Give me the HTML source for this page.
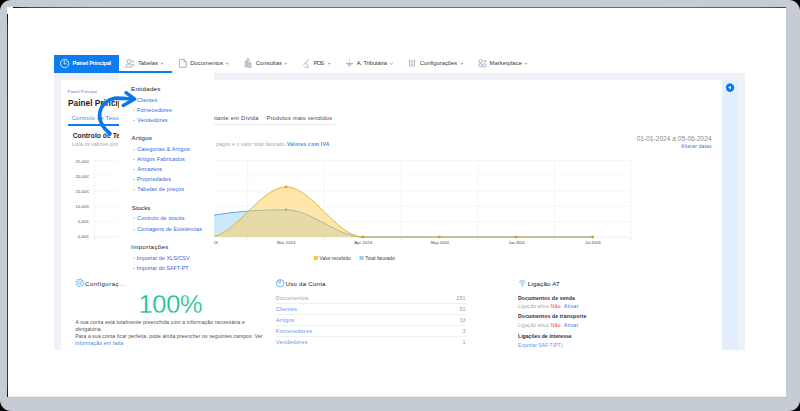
<!DOCTYPE html>
<html><head><meta charset="utf-8">
<style>
*{margin:0;padding:0;box-sizing:border-box}
html,body{width:800px;height:411px;overflow:hidden;background:#000;font-family:"Liberation Sans",sans-serif}
.r{position:absolute}
.a{position:absolute;white-space:nowrap;line-height:1;z-index:2}
.dd .a{z-index:6}
svg{position:absolute;left:0;top:0;overflow:visible}
</style></head><body>
<div class="r" style="left:0;top:0;width:800px;height:411px;background:#c6ccd4;border-radius:11px"></div>
<div class="r" style="left:7px;top:7px;width:779px;height:390px;background:#fff"></div>
<div class="r" style="left:13px;top:7px;width:773px;height:1px;background:linear-gradient(90deg,#0c1220,#3e4a62 2.5%,#5e6a82 10%,#66728a 50%,#5c6880 96%,#3a465c)"></div>
<div class="r" style="left:8px;top:396px;width:778px;height:1px;background:linear-gradient(180deg,#f4f5f7,#e9ecef)"></div>
<div class="r" style="left:7px;top:397px;width:779px;height:1px;background:#bdc4cd"></div>
<div class="r" style="left:7px;top:14px;width:1px;height:383px;background:linear-gradient(180deg,#0c1220,#2c3a56 4%,#34425e 50%,#2c3a56 96%,#0c1220)"></div>
<!-- nav -->
<div class="r" style="left:54px;top:55px;width:65px;height:18px;background:#0b7df0"></div>
<div class="r" style="left:119px;top:71px;width:53px;height:2px;background:#0b7df0"></div>
<!-- content bg -->
<div class="r" style="left:54px;top:73px;width:691px;height:277px;background:#f0f1f7"></div>
<div class="r" style="left:61px;top:80px;width:661px;height:270px;background:#fff"></div>
<div class="r" style="left:722px;top:80px;width:16px;height:270px;background:#e3effc"></div>
<!-- tab underlines -->
<div class="r" style="left:68px;top:124px;width:72px;height:2px;background:#0b7df0"></div>
<div class="r" style="left:142px;top:124px;width:119.7px;height:1px;background:#e8e9ec"></div>
<div class="r" style="left:263.3px;top:124px;width:72px;height:1px;background:#e8e9ec"></div>
<!-- uso separators -->
<div class="r" style="left:276px;top:303px;width:190px;height:1px;background:#eef0f2"></div>
<div class="r" style="left:276px;top:314px;width:190px;height:1px;background:#eef0f2"></div>
<div class="r" style="left:276px;top:325px;width:190px;height:1px;background:#eef0f2"></div>
<div class="r" style="left:276px;top:336px;width:190px;height:1px;background:#eef0f2"></div>
<svg width="800" height="411" viewBox="0 0 800 411">
<line x1="94.5" y1="160.60" x2="631" y2="160.60" stroke="#e9eaec" stroke-width="0.8" stroke-dasharray="2,2"/>
<line x1="94.5" y1="175.88" x2="631" y2="175.88" stroke="#e9eaec" stroke-width="0.8" stroke-dasharray="2,2"/>
<line x1="94.5" y1="191.16" x2="631" y2="191.16" stroke="#e9eaec" stroke-width="0.8" stroke-dasharray="2,2"/>
<line x1="94.5" y1="206.44" x2="631" y2="206.44" stroke="#e9eaec" stroke-width="0.8" stroke-dasharray="2,2"/>
<line x1="94.5" y1="221.72" x2="631" y2="221.72" stroke="#e9eaec" stroke-width="0.8" stroke-dasharray="2,2"/>
<line x1="94.50" y1="160.6" x2="94.50" y2="237.0" stroke="#e9eaec" stroke-width="0.8" stroke-dasharray="2,2"/>
<line x1="94.50" y1="237.0" x2="94.50" y2="241.0" stroke="#dfe3ea" stroke-width="0.8"/>
<line x1="171.14" y1="160.6" x2="171.14" y2="237.0" stroke="#e9eaec" stroke-width="0.8" stroke-dasharray="2,2"/>
<line x1="171.14" y1="237.0" x2="171.14" y2="241.0" stroke="#dfe3ea" stroke-width="0.8"/>
<line x1="247.79" y1="160.6" x2="247.79" y2="237.0" stroke="#e9eaec" stroke-width="0.8" stroke-dasharray="2,2"/>
<line x1="247.79" y1="237.0" x2="247.79" y2="241.0" stroke="#dfe3ea" stroke-width="0.8"/>
<line x1="324.43" y1="160.6" x2="324.43" y2="237.0" stroke="#e9eaec" stroke-width="0.8" stroke-dasharray="2,2"/>
<line x1="324.43" y1="237.0" x2="324.43" y2="241.0" stroke="#dfe3ea" stroke-width="0.8"/>
<line x1="401.07" y1="160.6" x2="401.07" y2="237.0" stroke="#e9eaec" stroke-width="0.8" stroke-dasharray="2,2"/>
<line x1="401.07" y1="237.0" x2="401.07" y2="241.0" stroke="#dfe3ea" stroke-width="0.8"/>
<line x1="477.71" y1="160.6" x2="477.71" y2="237.0" stroke="#e9eaec" stroke-width="0.8" stroke-dasharray="2,2"/>
<line x1="477.71" y1="237.0" x2="477.71" y2="241.0" stroke="#dfe3ea" stroke-width="0.8"/>
<line x1="554.36" y1="160.6" x2="554.36" y2="237.0" stroke="#e9eaec" stroke-width="0.8" stroke-dasharray="2,2"/>
<line x1="554.36" y1="237.0" x2="554.36" y2="241.0" stroke="#dfe3ea" stroke-width="0.8"/>
<line x1="631.00" y1="160.6" x2="631.00" y2="237.0" stroke="#e9eaec" stroke-width="0.8" stroke-dasharray="2,2"/>
<line x1="631.00" y1="237.0" x2="631.00" y2="241.0" stroke="#dfe3ea" stroke-width="0.8"/>
<line x1="94.5" y1="237.0" x2="631" y2="237.0" stroke="#e4eaf2" stroke-width="0.6"/>
<path d="M132.82,237.00 C158.37,229.97 183.92,220.45 209.46,215.91 C235.01,211.38 260.56,209.80 286.11,209.80 C311.65,209.80 337.20,237.00 362.75,237.00 C388.30,237.00 413.85,237.00 439.39,237.00 C464.94,237.00 490.49,237.00 516.04,237.00 C541.58,237.00 567.13,237.00 592.68,237.00 L592.68,237.0 L132.82,237.0 Z" fill="rgba(54,162,235,0.25)"/>
<path d="M132.82,237.00 C158.37,229.97 183.92,220.45 209.46,215.91 C235.01,211.38 260.56,209.80 286.11,209.80 C311.65,209.80 337.20,237.00 362.75,237.00 C388.30,237.00 413.85,237.00 439.39,237.00 C464.94,237.00 490.49,237.00 516.04,237.00 C541.58,237.00 567.13,237.00 592.68,237.00" fill="none" stroke="#3d8fd9" stroke-width="0.8"/>
<circle cx="132.82" cy="237.00" r="1.3" fill="#3d8fd9"/>
<circle cx="209.46" cy="215.91" r="1.3" fill="#3d8fd9"/>
<circle cx="286.11" cy="209.80" r="1.3" fill="#3d8fd9"/>
<circle cx="362.75" cy="237.00" r="1.3" fill="#3d8fd9"/>
<circle cx="439.39" cy="237.00" r="1.3" fill="#3d8fd9"/>
<circle cx="516.04" cy="237.00" r="1.3" fill="#3d8fd9"/>
<circle cx="592.68" cy="237.00" r="1.3" fill="#3d8fd9"/>
<path d="M132.82,237.00 C158.37,237.00 183.92,237.00 209.46,237.00 C235.01,237.00 260.56,186.88 286.11,186.88 C311.65,186.88 337.20,237.00 362.75,237.00 C388.30,237.00 413.85,237.00 439.39,237.00 C464.94,237.00 490.49,237.00 516.04,237.00 C541.58,237.00 567.13,237.00 592.68,237.00 L592.68,237.0 L132.82,237.0 Z" fill="rgba(255,205,86,0.5)"/>
<path d="M132.82,237.00 C158.37,237.00 183.92,237.00 209.46,237.00 C235.01,237.00 260.56,186.88 286.11,186.88 C311.65,186.88 337.20,237.00 362.75,237.00 C388.30,237.00 413.85,237.00 439.39,237.00 C464.94,237.00 490.49,237.00 516.04,237.00 C541.58,237.00 567.13,237.00 592.68,237.00" fill="none" stroke="#e6ae22" stroke-width="0.9"/>
<circle cx="132.82" cy="237.00" r="1.3" fill="#d9a41c"/>
<circle cx="209.46" cy="237.00" r="1.3" fill="#d9a41c"/>
<circle cx="286.11" cy="186.88" r="1.3" fill="#d9a41c"/>
<circle cx="362.75" cy="237.00" r="1.3" fill="#d9a41c"/>
<circle cx="439.39" cy="237.00" r="1.3" fill="#d9a41c"/>
<circle cx="516.04" cy="237.00" r="1.3" fill="#d9a41c"/>
<circle cx="592.68" cy="237.00" r="1.3" fill="#d9a41c"/>
<rect x="313.7" y="255.9" width="4.4" height="4" fill="#f6c94a"/>
<rect x="359.4" y="255.9" width="4.2" height="4" fill="#93cff5"/>
<!-- sidebar button -->
<circle cx="730" cy="87.6" r="5" fill="#fff"/>
<circle cx="730" cy="87.6" r="4.3" fill="#0b7df0"/>
<path d="M728.2,87.6 L730.9,85.9 L730.9,89.3 Z" fill="#fff"/>
<!-- nav icons -->
<g fill="none" stroke="#fff" stroke-width="0.8">
<circle cx="64.7" cy="63.5" r="4.2"/>
<path d="M64.2,60.3 V63.9 H66.6"/>
<path d="M66.2,60.8 L67.2,61.8"/>
</g>
<g fill="none" stroke="#94a1b8" stroke-width="0.8">
<circle cx="129" cy="61.4" r="1.9"/>
<path d="M126,67 V65.6 Q126,64.2 127.6,64.2 H130.4 Q132,64.2 132,65.6 V67 Z"/>
<path d="M131.5,60.2 Q133.6,60.4 133.2,62.6 M132.6,64.4 Q134.6,64.6 134.6,66.2"/>
<path d="M179.6,59.4 H184 L186.2,61.6 V67.3 H179.6 Z"/>
<path d="M184,59.4 V61.6 H186.2"/>
<path d="M245.2,67.5 V61.2 H247 V67.5 M247.2,67.5 V58.8 H249 V67.5 M249.2,67.5 V63 H251 V67.5 Z"/>
<path d="M303.4,65.2 L308.6,59.4 M305.6,62.6 L308.2,66.2 M304.6,67.2 H309"/>
<path d="M345.9,63.4 H353 M349.4,59.2 V60.4 M349.4,62 V63.4 M349.4,64.6 V66 M349.4,66.8 V67.8 M347.2,64.8 H351.6"/>
<path d="M409.6,59.6 V67 M412,59.6 V67 M414.4,59.6 V67"/>
<path d="M408.8,61.6 H410.4 M411.2,64.6 H412.8 M413.6,61.2 H415.2"/>
<circle cx="480.6" cy="61.2" r="1.7"/>
<path d="M483.8,61.2 H486.2 M485,60 V62.4"/>
<rect x="478.9" y="63.9" width="3.3" height="3" rx="1"/>
<rect x="482.9" y="63.9" width="3.3" height="3" rx="1"/>
</g>
<g fill="none" stroke="#5d6778" stroke-width="0.7">
<path d="M160.9,63 L162.1,64.2 L163.3,63"/>
<path d="M225.9,63 L227.1,64.2 L228.3,63"/>
<path d="M284.3,63 L285.5,64.2 L286.7,63"/>
<path d="M327.8,63 L329,64.2 L330.2,63"/>
<path d="M390.2,63 L391.4,64.2 L392.6,63"/>
<path d="M460.6,63 L461.8,64.2 L463,63"/>
<path d="M524.9,63 L526.1,64.2 L527.3,63"/>
</g>
<!-- bottom icons -->
<g fill="none" stroke="#4a9ff5" stroke-width="0.8">
<path d="M82.90,282.80 L83.77,283.27 L83.55,284.18 L82.56,284.21 L81.99,284.99 L82.28,285.94 L81.47,286.43 L80.76,285.75 L79.80,285.90 L79.33,286.77 L78.42,286.55 L78.39,285.56 L77.61,284.99 L76.66,285.28 L76.17,284.47 L76.85,283.76 L76.70,282.80 L75.83,282.33 L76.05,281.42 L77.04,281.39 L77.61,280.61 L77.32,279.66 L78.13,279.17 L78.84,279.85 L79.80,279.70 L80.27,278.83 L81.18,279.05 L81.21,280.04 L81.99,280.61 L82.94,280.32 L83.43,281.13 L82.75,281.84 Z" stroke-width="0.7" stroke-linejoin="round"/>
<circle cx="79.8" cy="282.8" r="1.4" stroke-width="0.7"/>
<circle cx="280.2" cy="283.3" r="3.7"/>
<path d="M277.4,280.9 L280.2,283.3 V279.6"/>
<path d="M519.2,282.2 Q522.4,279 525.6,282.2 M520.4,283.5 Q522.4,281.6 524.4,283.5 M521.6,284.8 Q522.4,284 523.2,284.8"/>
<circle cx="522.4" cy="285.9" r="0.35"/>
</g>
</svg>
<div class="a" style="left:72.55px;top:61px;font-size:5.8px;color:#ffffff;font-weight:700;letter-spacing:-0.300px">Painel Principal</div>
<div class="a" style="left:137.90px;top:61px;font-size:5.8px;color:#34373e;letter-spacing:0.025px">Tabelas</div>
<div class="a" style="left:190.30px;top:61px;font-size:5.8px;color:#34373e;letter-spacing:0.044px">Documentos</div>
<div class="a" style="left:255.75px;top:61px;font-size:5.8px;color:#34373e;letter-spacing:0.038px">Consultas</div>
<div class="a" style="left:313.70px;top:61px;font-size:5.8px;color:#34373e;letter-spacing:-0.850px">POS</div>
<div class="a" style="left:356.80px;top:61px;font-size:5.8px;color:#34373e;letter-spacing:-0.088px">A. Tributária</div>
<div class="a" style="left:419.75px;top:61px;font-size:5.8px;color:#34373e">Configurações</div>
<div class="a" style="left:489.50px;top:61px;font-size:5.8px;color:#34373e;letter-spacing:0.080px">Marketplace</div>
<div class="a" style="left:67.85px;top:90px;font-size:4.1px;color:#6b6fd6;letter-spacing:0.057px">Painel Principal</div>
<div class="a" style="left:68.00px;top:99px;font-size:8.3px;color:#1d1f24;font-weight:700">Painel Principal</div>
<div class="a" style="left:266.40px;top:116px;font-size:5.7px;color:#45484f;letter-spacing:0.243px">Produtos mais vendidos</div>
<div class="a" style="left:72.65px;top:133px;font-size:6.8px;color:#2a2c31;font-weight:700">Controlo de Tesouraria</div>
<div class="a" style="left:71.65px;top:142px;font-size:5.0px;color:#a3a6ab;letter-spacing:0.118px">Lista os valores dos</div>
<div class="a" style="left:286.90px;top:142px;font-size:5.0px;color:#3b8ee8;font-weight:700;letter-spacing:0.254px">Valores com IVA</div>
<div class="a" style="left:636.65px;top:136px;font-size:6.4px;color:#84868b;letter-spacing:0.107px">01-01-2024 a 05-06-2024</div>
<div class="a" style="left:681.00px;top:145px;font-size:4.8px;color:#2f6fd0;letter-spacing:0.271px">Alterar datas</div>
<div class="a" style="left:75.55px;top:160px;font-size:4.3px;color:#45484e;letter-spacing:0.070px">25,00€</div>
<div class="a" style="left:75.55px;top:175px;font-size:4.3px;color:#45484e;letter-spacing:0.070px">20,00€</div>
<div class="a" style="left:75.55px;top:190px;font-size:4.3px;color:#45484e;letter-spacing:0.070px">15,00€</div>
<div class="a" style="left:75.55px;top:205px;font-size:4.3px;color:#45484e;letter-spacing:0.070px">10,00€</div>
<div class="a" style="left:276.95px;top:241px;font-size:4.2px;color:#45484e;letter-spacing:0.100px">Mar 2024</div>
<div class="a" style="left:354.20px;top:241px;font-size:4.2px;color:#45484e;letter-spacing:0.129px">Apr 2024</div>
<div class="a" style="left:430.65px;top:241px;font-size:4.2px;color:#45484e;letter-spacing:-0.014px">May 2024</div>
<div class="a" style="left:508.50px;top:241px;font-size:4.2px;color:#45484e;letter-spacing:-0.179px">Jun 2024</div>
<div class="a" style="left:585.30px;top:241px;font-size:4.2px;color:#45484e;letter-spacing:-0.079px">Jul 2024</div>
<div class="a" style="left:319.50px;top:257px;font-size:4.8px;color:#3a3c40;letter-spacing:0.038px">Valor recebido</div>
<div class="a" style="left:365.20px;top:257px;font-size:4.8px;color:#3a3c40;letter-spacing:0.054px">Total faturado</div>
<div class="a" style="left:85.10px;top:281px;font-size:6.0px;color:#15171b;letter-spacing:0.489px">Configuraç</div>
<div class="a" style="left:119.25px;top:283px;font-size:4.5px;color:#1d1f24;letter-spacing:1.075px">...</div>
<div class="a" style="left:138.45px;top:292px;font-size:25.4px;color:#12c088;letter-spacing:-0.250px;-webkit-text-stroke:0.3px #fff">100%</div>
<div class="a" style="left:75.50px;top:320px;font-size:5.0px;color:#4a4c52;letter-spacing:0.157px">A sua conta está totalmente preenchida com a informação necessária e</div>
<div class="a" style="left:75.25px;top:334px;font-size:5.0px;color:#4a4c52;letter-spacing:0.136px">Para a sua conta ficar perfeita, pode ainda preencher os seguintes campos: Ver</div>
<div class="a" style="left:75.25px;top:341px;font-size:5.0px;color:#3a7fe0;letter-spacing:0.222px">informação em falta</div>
<div class="a" style="left:285.50px;top:281px;font-size:6.2px;color:#15171b;letter-spacing:0.200px">Uso da Conta</div>
<div class="a" style="left:275.75px;top:296px;font-size:5.5px;color:#a0a2a8;letter-spacing:0.200px">Documentos</div>
<div class="a" style="left:456.25px;top:296px;font-size:5.5px;color:#a0a2a8;letter-spacing:0.125px">281</div>
<div class="a" style="left:527.80px;top:281px;font-size:6.2px;color:#15171b;letter-spacing:0.178px">Ligação AT</div>
<div class="a" style="left:518.05px;top:296px;font-size:5.1px;color:#2a2c30;font-weight:700;letter-spacing:0.142px">Documentos de venda</div>
<div class="a" style="left:518.05px;top:304px;font-size:5.1px;color:#a8aaaf;letter-spacing:0.035px">Ligação ativa:</div>
<div class="a" style="left:550.75px;top:304px;font-size:5.1px;color:#f0443a;letter-spacing:0.200px">Não</div>
<div class="a" style="left:564.00px;top:304px;font-size:5.1px;color:#3a6fd8;letter-spacing:0.280px">Ativar</div>
<div class="a" style="left:518.05px;top:314px;font-size:5.1px;color:#2a2c30;font-weight:700;letter-spacing:0.148px">Documentos de transporte</div>
<div class="a" style="left:518.05px;top:323px;font-size:5.1px;color:#a8aaaf;letter-spacing:0.035px">Ligação ativa:</div>
<div class="a" style="left:550.75px;top:323px;font-size:5.1px;color:#f0443a;letter-spacing:0.200px">Não</div>
<div class="a" style="left:564.00px;top:323px;font-size:5.1px;color:#3a6fd8;letter-spacing:0.280px">Ativar</div>
<div class="a" style="left:518.05px;top:334px;font-size:5.1px;color:#2a2c30;font-weight:700;letter-spacing:0.020px">Ligações de interesse</div>
<div class="a" style="left:518.05px;top:343px;font-size:5.1px;color:#5a9aee;letter-spacing:-0.056px">Exportar SAF-T(PT)</div>
<div class="a" style="left:71.75px;top:116px;font-size:5.7px;color:#3b82f0;letter-spacing:0.243px">Controlo de Tesouraria</div>
<div class="a" style="left:203.37px;top:116px;font-size:5.7px;color:#45484f;letter-spacing:0.243px">Montante em Dívida</div>
<div class="a" style="left:216.30px;top:142px;font-size:5.0px;color:#a3a6ab;letter-spacing:0.118px">pagos e o valor total faturado.</div>
<div class="a" style="left:77.87px;top:220px;font-size:4.3px;color:#45484e;letter-spacing:0.070px">5,00€</div>
<div class="a" style="left:77.87px;top:235px;font-size:4.3px;color:#45484e;letter-spacing:0.070px">0,00€</div>
<div class="a" style="left:199.55px;top:241px;font-size:4.2px;color:#45484e;letter-spacing:0.100px">Feb 2024</div>
<div class="a" style="left:75.25px;top:327px;font-size:5.0px;color:#4a4c52;letter-spacing:0.157px">obrigatória.</div>
<div class="a" style="left:275.75px;top:307px;font-size:5.5px;color:#5a9aee;letter-spacing:0.200px">Clientes</div>
<div class="a" style="left:276.00px;top:318px;font-size:5.5px;color:#5a9aee;letter-spacing:0.200px">Artigos</div>
<div class="a" style="left:275.75px;top:329px;font-size:5.5px;color:#5a9aee;letter-spacing:0.200px">Fornecedores</div>
<div class="a" style="left:276.00px;top:340px;font-size:5.5px;color:#5a9aee;letter-spacing:0.200px">Vendedores</div>
<div class="a" style="left:459.38px;top:307px;font-size:5.5px;color:#a0a2a8;letter-spacing:0.125px">51</div>
<div class="a" style="left:459.38px;top:318px;font-size:5.5px;color:#a0a2a8;letter-spacing:0.125px">33</div>
<div class="a" style="left:462.50px;top:329px;font-size:5.5px;color:#a0a2a8;letter-spacing:0.125px">3</div>
<div class="a" style="left:462.50px;top:340px;font-size:5.5px;color:#a0a2a8;letter-spacing:0.125px">1</div>
<!-- dropdown -->
<div class="dd">
<div class="r" style="left:119px;top:73px;width:95px;height:203px;background:#fff;z-index:5"></div>
<div class="a" style="left:131.10px;top:86px;font-size:6.2px;color:#15171b;letter-spacing:0.213px">Entidades</div><div class="a" style="left:137.05px;top:98px;font-size:5.5px;color:#3566e6;letter-spacing:0.043px">Clientes</div><div class="a" style="left:137.05px;top:108px;font-size:5.5px;color:#3566e6;letter-spacing:0.064px">Fornecedores</div><div class="a" style="left:137.30px;top:118px;font-size:5.5px;color:#3566e6;letter-spacing:0.106px">Vendedores</div>
<div class="a" style="left:131.60px;top:135px;font-size:6.2px;color:#15171b;letter-spacing:0.175px">Artigos</div><div class="a" style="left:137.05px;top:147px;font-size:5.5px;color:#3566e6;letter-spacing:0.129px">Categorias & Artigos</div><div class="a" style="left:137.30px;top:157px;font-size:5.5px;color:#3566e6;letter-spacing:0.097px">Artigos Fabricados</div><div class="a" style="left:137.30px;top:167px;font-size:5.5px;color:#3566e6;letter-spacing:0.007px">Armazéns</div><div class="a" style="left:137.05px;top:177px;font-size:5.5px;color:#3566e6;letter-spacing:0.114px">Propriedades</div><div class="a" style="left:137.30px;top:187px;font-size:5.5px;color:#3566e6;letter-spacing:0.125px">Tabelas de preços</div>
<div class="a" style="left:131.85px;top:205px;font-size:6.2px;color:#15171b;letter-spacing:-0.010px">Stocks</div><div class="a" style="left:137.05px;top:216px;font-size:5.5px;color:#3566e6;letter-spacing:0.115px">Controlo de stocks</div><div class="a" style="left:137.05px;top:227px;font-size:5.5px;color:#3566e6;letter-spacing:0.054px">Contagens de Existências</div>
<div class="a" style="left:131.10px;top:244px;font-size:6.2px;color:#15171b;letter-spacing:0.330px">Importações</div><div class="a" style="left:136.80px;top:256px;font-size:5.5px;color:#3566e6">Importar de XLS/CSV</div><div class="a" style="left:136.80px;top:266px;font-size:5.5px;color:#3566e6;letter-spacing:-0.019px">Importar do SAFT-PT</div>
<div class="r" style="left:133.2px;top:100px;width:1.4px;height:1px;background:#c9ccd3;z-index:6"></div>
<div class="r" style="left:133.2px;top:110px;width:1.4px;height:1px;background:#c9ccd3;z-index:6"></div>
<div class="r" style="left:133.2px;top:120px;width:1.4px;height:1px;background:#c9ccd3;z-index:6"></div>
<div class="r" style="left:133.2px;top:149px;width:1.4px;height:1px;background:#c9ccd3;z-index:6"></div>
<div class="r" style="left:133.2px;top:159px;width:1.4px;height:1px;background:#c9ccd3;z-index:6"></div>
<div class="r" style="left:133.2px;top:169px;width:1.4px;height:1px;background:#c9ccd3;z-index:6"></div>
<div class="r" style="left:133.2px;top:179px;width:1.4px;height:1px;background:#c9ccd3;z-index:6"></div>
<div class="r" style="left:133.2px;top:189px;width:1.4px;height:1px;background:#c9ccd3;z-index:6"></div>
<div class="r" style="left:133.2px;top:218px;width:1.4px;height:1px;background:#c9ccd3;z-index:6"></div>
<div class="r" style="left:133.2px;top:229px;width:1.4px;height:1px;background:#c9ccd3;z-index:6"></div>
<div class="r" style="left:133.2px;top:258px;width:1.4px;height:1px;background:#c9ccd3;z-index:6"></div>
<div class="r" style="left:133.2px;top:268px;width:1.4px;height:1px;background:#c9ccd3;z-index:6"></div>
</div>
<svg width="800" height="411" viewBox="0 0 800 411" style="z-index:10">
<path d="M110,133.6 C103.6,128.4 99.6,122.5 99.6,115.8 C99.6,105.8 107.6,98.05 118,98.05 L133,99" fill="none" stroke="#0a78ea" stroke-width="3.7" stroke-linecap="round"/>
<path d="M126,92.7 L134.8,99.1 L123.2,105.5" fill="none" stroke="#0a78ea" stroke-width="3.4" stroke-linecap="round" stroke-linejoin="round"/>
</svg>
</body></html>
